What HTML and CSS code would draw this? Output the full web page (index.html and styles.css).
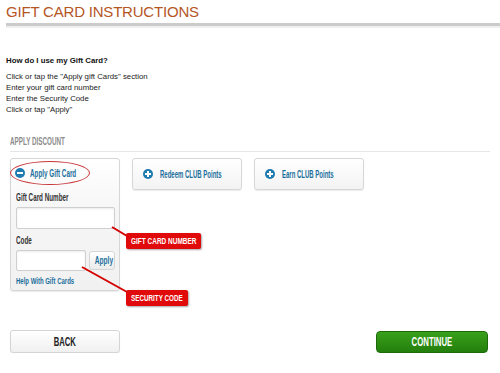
FILE: index.html
```html
<!DOCTYPE html>
<html lang="en">
<head>
  <meta charset="UTF-8">
  <title>Gift Card Instructions</title>
  <meta name="viewport" content="width=device-width, initial-scale=1.0"/>
  <link rel="stylesheet" href="styles.css">
</head>
<body>
  <h1 class="title">GIFT CARD INSTRUCTIONS</h1>

  <div class="howto">
    <h3>How do I use my Gift Card?</h3>
    <p>Click or tap the "Apply gift Cards" section</p>
    <p>Enter your gift card number</p>
    <p>Enter the Security Code</p>
    <p>Click or tap "Apply"</p>
  </div>

  <div class="discount">
    <div class="section-head"><span class="cond">APPLY DISCOUNT</span></div>

    <div class="cards">
      <div class="card gift">
        <div class="card-head">
          <span class="icon minus"></span>
          <span class="cond link">Apply Gift Card</span>
        </div>
        <label class="cond field-label first">Gift Card Number</label>
        <input type="text" class="field wide">
        <label class="cond field-label">Code</label>
        <div class="code-row">
          <input type="text" class="field short">
          <button class="apply"><span class="cond mid">Apply</span></button>
        </div>
        <a class="cond link help">Help With Gift Cards</a>
        <span class="oval"></span>
      </div>

      <div class="card small">
        <span class="icon plus"></span>
        <span class="cond link">Redeem CLUB Points</span>
      </div>

      <div class="card small">
        <span class="icon plus"></span>
        <span class="cond link">Earn CLUB Points</span>
      </div>

      <!-- callouts drawn on top of the screenshot -->
      <svg class="pointers" width="200" height="160">
        <line x1="102" y1="69" x2="117" y2="78" />
        <line x1="72" y1="109" x2="117" y2="134" />
      </svg>
      <span class="tag tag-number"><span class="cond">GIFT CARD NUMBER</span></span>
      <span class="tag tag-code"><span class="cond">SECURITY CODE</span></span>
    </div>
  </div>

  <div class="footer">
    <button class="btn back"><span class="cond mid">BACK</span></button>
    <button class="btn continue"><span class="cond mid">CONTINUE</span></button>
  </div>
</body>
</html>
```

FILE: styles.css
```css
body { margin: 0; width: 500px; font-family: "Liberation Sans", Arial, sans-serif; color: #111; background: #fff; }

/* the original uses a narrow display face; squeeze Arial-metric bold to match */
.cond { display: inline-block; font-family: "Liberation Sans", Arial, sans-serif; font-weight: bold; white-space: nowrap; transform: scaleX(0.63); transform-origin: left center; }
.cond.mid { transform-origin: center center; }

.title { margin: 0 0 0 6px; padding: 3px 0 2px; font-size: 15px; line-height: 18px; font-weight: normal; letter-spacing: -0.2px; color: #b5561f; border-bottom: 3px solid #cbcbcb; box-shadow: 0 2px 0 #efefef; }

.howto { margin: 29px 0 0 6px; font-size: 7.8px; }
.howto h3 { margin: 0 0 5px; font-size: 7.8px; line-height: 11px; }
.howto p { margin: 0; line-height: 11px; color: #222; }

.discount { margin: 21px 10px 0; }
.section-head { padding-bottom: 4px; font-size: 10px; line-height: 11px; color: #8c8c8c; border-bottom: 1px solid #e6e6e6; }

.cards { position: relative; display: flex; align-items: flex-start; gap: 12px; margin-top: 6px; }
.card { box-sizing: border-box; width: 110px; border: 1px solid #d6d6d6; border-radius: 3px; background: linear-gradient(#fff, #f3f3f3); box-shadow: 0 1px 1px rgba(0,0,0,0.08); }
.card.small { height: 32px; display: flex; align-items: center; gap: 7px; padding-left: 10px; }
.card.small .cond { transform: scaleX(0.6); }
.card.gift { position: relative; height: 133px; padding: 0 4px 0 5px; background: linear-gradient(#fff, #f6f6f6 40%, #f1f1f1); }
.card-head { display: flex; align-items: center; gap: 5px; height: 28px; margin-left: -1px; }

.link { color: #1c6f9c; font-size: 10px; }
.icon { position: relative; width: 10px; height: 10px; border-radius: 50%; background: #1d7bb0; flex: none; }
.icon::before { content: ""; position: absolute; left: 2px; top: 4px; width: 6px; height: 2px; background: #fff; }
.icon.plus::after { content: ""; position: absolute; left: 4px; top: 2px; width: 2px; height: 6px; background: #fff; }

.field-label { display: block; font-size: 10px; line-height: 11px; color: #333; }
.field-label.first { margin-top: 5px; }
.field { box-sizing: border-box; display: block; border: 1px solid #cfcfcf; border-radius: 2px; background: #fff; box-shadow: inset 0 1px 2px rgba(0,0,0,0.08); padding: 0; }
.field.wide { width: 99px; height: 22px; margin: 4px 0 6px; }
.code-row { display: flex; align-items: center; gap: 3px; margin-top: 4px; }
.field.short { width: 70px; height: 21px; }
.apply { box-sizing: border-box; width: 26px; height: 19px; padding: 0; border: 1px solid #d6d6d6; border-radius: 3px; background: linear-gradient(#fff, #ececec); color: #1c6f9c; font-size: 10px; line-height: 17px; }
.apply .cond { transform: scaleX(0.66); }
.help { display: block; margin-top: 4px; font-size: 9.5px; line-height: 11px; }

.oval { position: absolute; left: -1px; top: 2px; width: 80px; height: 24px; box-sizing: border-box; border: 1px solid #c8363a; border-radius: 50%; }

.pointers { position: absolute; left: 0; top: 0; pointer-events: none; }
.pointers line { stroke: #d40000; stroke-width: 2; }
.tag { position: absolute; left: 116px; box-sizing: border-box; height: 16px; padding-left: 5px; line-height: 16px; font-size: 9px; color: #fff; background: #e10a0a; border-radius: 2px; box-shadow: 1px 1px 2px rgba(0,0,0,0.35); }
.tag .cond { transform: scaleX(0.72); }
.tag-number { top: 75px; width: 75px; }
.tag-code { top: 132px; width: 62px; }
.tag-code .cond { transform: scaleX(0.7); }

.footer { display: flex; justify-content: space-between; align-items: flex-start; margin: 39px 12px 0 10px; }
.btn { box-sizing: border-box; width: 110px; height: 23px; padding: 0; border-radius: 3px; font-size: 13px; line-height: 20px; cursor: pointer; overflow: hidden; }
.back { border: 1px solid #d4d4d4; background: linear-gradient(#fff, #f0f0f0); color: #222; box-shadow: 0 1px 1px rgba(0,0,0,0.08); }
.back .cond { transform: scaleX(0.59); }
.continue { width: 112px; height: 22px; margin-top: 1px; border: 1px solid #1c6a0a; background: linear-gradient(#3aa01c, #237f0c); color: #fff; border-radius: 4px; }
.continue .cond { transform: scaleX(0.6); }
```
